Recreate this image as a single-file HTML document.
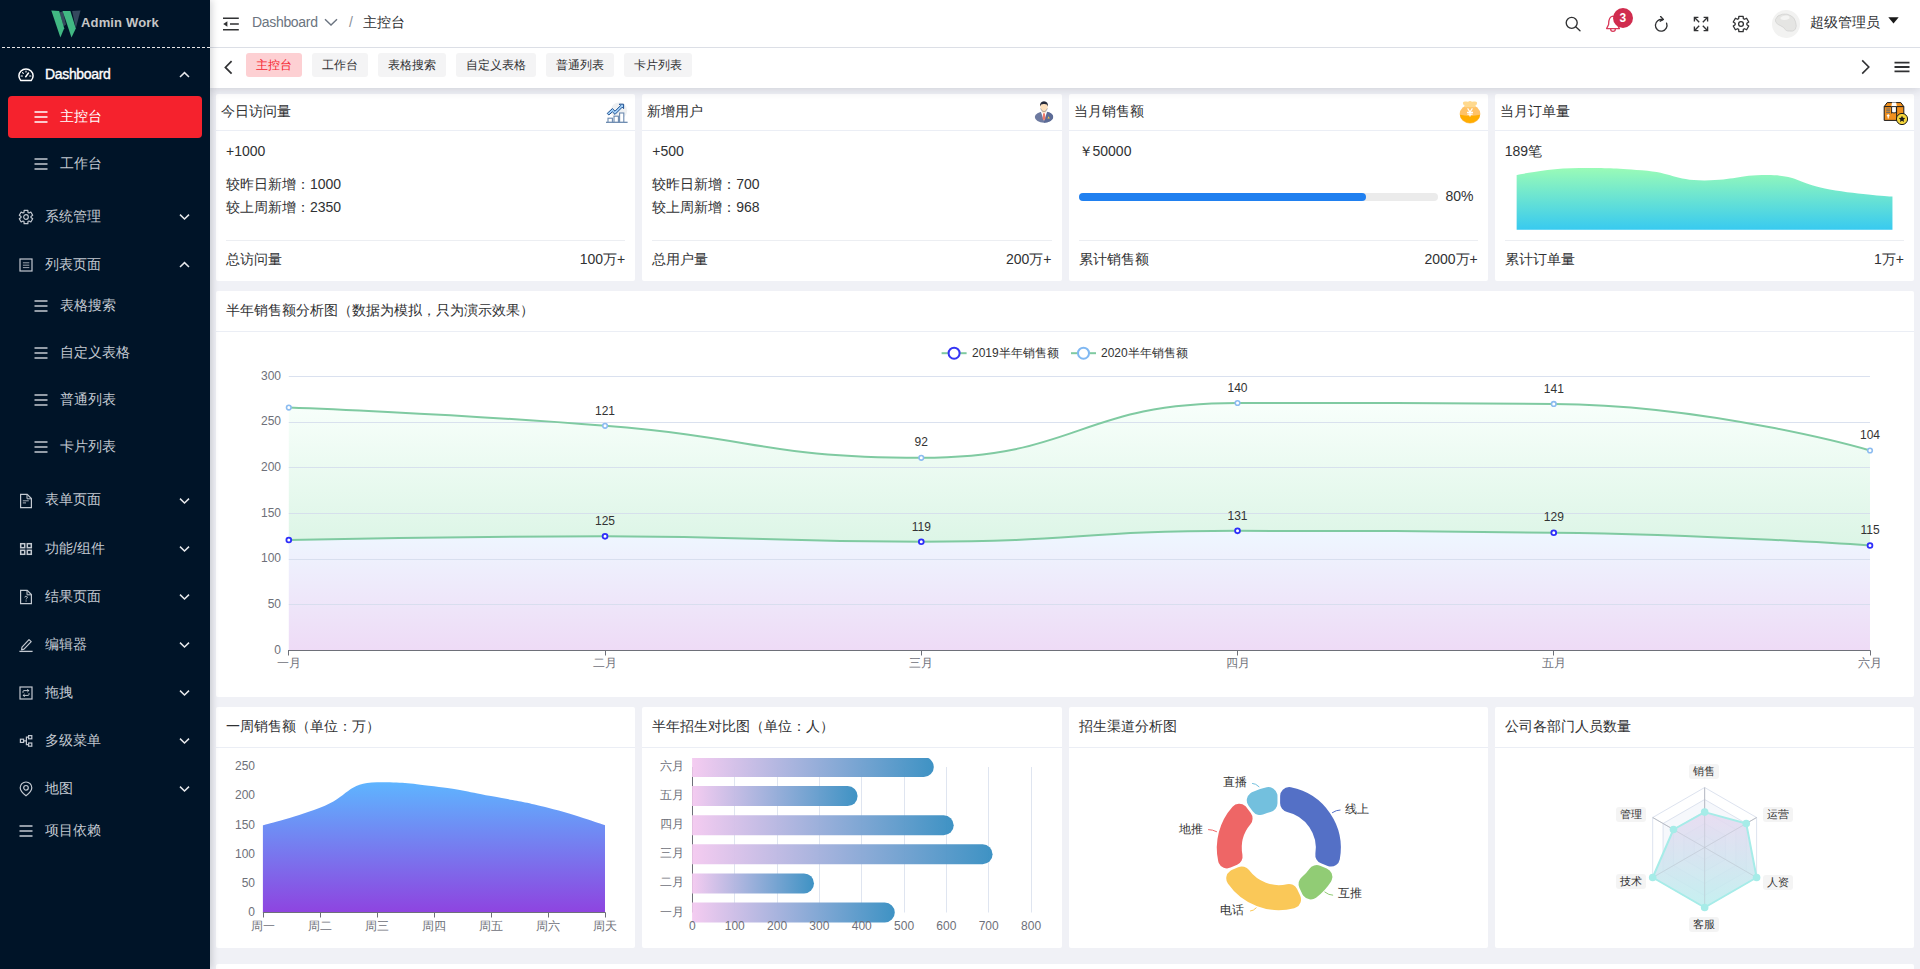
<!DOCTYPE html>
<html lang="zh"><head><meta charset="utf-8"><title>Admin Work</title>
<style>
html,body{margin:0;padding:0}
body{width:1920px;height:969px;overflow:hidden;position:relative;background:#f0f1f6;font-family:"Liberation Sans", sans-serif;font-size:14px;color:#303133}
div,span,svg{position:absolute;box-sizing:border-box}
span{white-space:pre;line-height:16px;height:16px}
.card{background:#fff;border-radius:2px}
.hd{left:0;top:0;width:100%;border-bottom:1px solid #ebeef5}
.t14{font-size:14px}
.t12{font-size:12px;line-height:14px;height:14px}
.ax{font-size:12px;line-height:14px;height:14px;color:#6e7079}
.r{text-align:right}
.c{text-align:center}
.mi{color:#c3c9d1;font-size:14px}
.tab{top:53px;height:24px;border-radius:3px;background:#f4f4f5;color:#303133;font-size:12px;line-height:24px;text-align:center}
.lbl{font-size:11px;line-height:15px;height:15px;width:30px;text-align:center;background:#f4f4f4;border-radius:3px;color:#333}
</style></head><body>

<div id="side" style="left:0;top:0;width:210px;height:969px;background:#001428;box-shadow:2px 0 7px rgba(0,10,25,.17);z-index:5">
<svg style="left:0;top:0" width="210" height="48" viewBox="0 0 210 48">
<polygon points="72.1,10.9 80.5,10.5 75.8,28.3" fill="#35495e"/>
<polygon points="59.6,12.5 63.0,11.2 66.0,24.6 63.6,26.2" fill="#35495e"/>
<polygon points="51.3,10.6 59.2,10.9 64.2,28.2 60.4,37.4" fill="#41b883"/>
<polygon points="62.6,10.9 70.4,10.9 75.8,28.4 71.5,37.4" fill="#41b883"/>
</svg>
<span style="left:81px;top:15px;font-size:13px;font-weight:700;color:#c6c6c6;letter-spacing:.15px">Admin Work</span>
<div style="left:0;top:47px;width:210px;height:1px;background:repeating-linear-gradient(90deg,#e8e8e8 0,#e8e8e8 3px,transparent 3px,transparent 5px);background-position:2px 0"></div>
<svg style="left:18px;top:66.5px" width="16" height="16" viewBox="0 0 16 16" fill="none" stroke="#fff" stroke-width="1.3" stroke-linecap="round" stroke-linejoin="round"><path d="M2.8,13.6 Q0.9,11.2 0.9,8.7 A7.1,6.7 0 0 1 15.1,8.7 Q15.1,11.2 13.2,13.6 Z" stroke-width="1.5"/><path d="M7.7,9.7 L10.5,6" stroke-width="1.5"/><path d="M3.1,9h1.3M11.6,9H12.9M8,4v1.1M4.5,5.6l.8,.8" stroke-width="1.1"/></svg>
<span class="mi" style="left:45px;top:66px;-webkit-text-stroke:.35px #fff;letter-spacing:-.33px;color:#fff">Dashboard</span>
<svg style="left:178.5px;top:71.0px" width="11" height="8" viewBox="0 0 11 8" fill="none" stroke="#e6e8eb" stroke-width="1.5"><path d="M1,6 L5.5,1.6 L10,6"/></svg>
<div style="left:8px;top:96.0px;width:194px;height:41.5px;border-radius:4px;background:#f5222d"></div>
<svg style="left:33px;top:108.9px" width="16" height="16" viewBox="0 0 16 16" fill="none" stroke="#fff" stroke-width="1.4"><path d="M1.5,3h13M1.5,8h13M1.5,13h13"/></svg>
<span class="mi" style="left:60px;top:108px;color:#fff">主控台</span>
<svg style="left:33px;top:155.75px" width="16" height="16" viewBox="0 0 16 16" fill="none" stroke="#c3c9d1" stroke-width="1.4"><path d="M1.5,3h13M1.5,8h13M1.5,13h13"/></svg>
<span class="mi" style="left:60px;top:155px;color:#c3c9d1">工作台</span>
<svg style="left:18px;top:208.6px" width="16" height="16" viewBox="0 0 16 16" fill="none" stroke="#c3c9d1" stroke-width="1.3" stroke-linecap="round" stroke-linejoin="round"><path d="M6.01,3.41 L6.14,1.35 L9.86,1.35 L9.99,3.41 L10.98,3.99 L12.83,3.07 L14.68,6.28 L12.97,7.43 L12.97,8.57 L14.68,9.72 L12.83,12.93 L10.98,12.01 L9.99,12.59 L9.86,14.65 L6.14,14.65 L6.01,12.59 L5.02,12.01 L3.17,12.93 L1.32,9.72 L3.03,8.57 L3.03,7.43 L1.32,6.28 L3.17,3.07 L5.02,3.99Z" stroke-width="1.2"/><circle cx="8" cy="8" r="2.3" stroke-width="1.2"/></svg>
<span class="mi" style="left:45px;top:208px;color:#c3c9d1">系统管理</span>
<svg style="left:178.5px;top:213.1px" width="11" height="8" viewBox="0 0 11 8" fill="none" stroke="#e6e8eb" stroke-width="1.5"><path d="M1,1.6 L5.5,6 L10,1.6"/></svg>
<svg style="left:18px;top:256.8px" width="16" height="16" viewBox="0 0 16 16" fill="none" stroke="#c3c9d1" stroke-width="1.3"  stroke-linejoin="miter"><rect x="2" y="2" width="12" height="12" stroke-width="1.2"/><path d="M4.9,5.8h6.4M4.9,8.2h6.4M4.9,10.6h6.4" stroke-width="1" stroke-opacity=".8"/></svg>
<span class="mi" style="left:45px;top:256px;color:#c3c9d1">列表页面</span>
<svg style="left:178.5px;top:261.3px" width="11" height="8" viewBox="0 0 11 8" fill="none" stroke="#e6e8eb" stroke-width="1.5"><path d="M1,6 L5.5,1.6 L10,6"/></svg>
<svg style="left:33px;top:298.3px" width="16" height="16" viewBox="0 0 16 16" fill="none" stroke="#c3c9d1" stroke-width="1.4"><path d="M1.5,3h13M1.5,8h13M1.5,13h13"/></svg>
<span class="mi" style="left:60px;top:297px;color:#c3c9d1">表格搜索</span>
<svg style="left:33px;top:345.2px" width="16" height="16" viewBox="0 0 16 16" fill="none" stroke="#c3c9d1" stroke-width="1.4"><path d="M1.5,3h13M1.5,8h13M1.5,13h13"/></svg>
<span class="mi" style="left:60px;top:344px;color:#c3c9d1">自定义表格</span>
<svg style="left:33px;top:392.2px" width="16" height="16" viewBox="0 0 16 16" fill="none" stroke="#c3c9d1" stroke-width="1.4"><path d="M1.5,3h13M1.5,8h13M1.5,13h13"/></svg>
<span class="mi" style="left:60px;top:391px;color:#c3c9d1">普通列表</span>
<svg style="left:33px;top:439.1px" width="16" height="16" viewBox="0 0 16 16" fill="none" stroke="#c3c9d1" stroke-width="1.4"><path d="M1.5,3h13M1.5,8h13M1.5,13h13"/></svg>
<span class="mi" style="left:60px;top:438px;color:#c3c9d1">卡片列表</span>
<svg style="left:18px;top:492.6px" width="16" height="16" viewBox="0 0 16 16" fill="none" stroke="#c3c9d1" stroke-width="1.3"  stroke-linejoin="miter"><path d="M2.6,1.4h6.6L13.4,5.6v9H2.6z" stroke-width="1.2"/><path d="M9,1.6V5.8H13.2" stroke-width="1"/><path d="M4.8,7.8h6M4.8,9.9h3.2" stroke-width="1" stroke-opacity=".85"/></svg>
<span class="mi" style="left:45px;top:491px;color:#c3c9d1">表单页面</span>
<svg style="left:178.5px;top:497.1px" width="11" height="8" viewBox="0 0 11 8" fill="none" stroke="#e6e8eb" stroke-width="1.5"><path d="M1,1.6 L5.5,6 L10,1.6"/></svg>
<svg style="left:18px;top:540.8px" width="16" height="16" viewBox="0 0 16 16" fill="none" stroke="#c3c9d1" stroke-width="1.3" stroke-linecap="round" stroke-linejoin="miter"><rect x="2.7" y="2.7" width="4" height="4" stroke-width="1.5"/><rect x="9.3" y="2.7" width="4" height="4" stroke-width="1.5"/><rect x="2.7" y="9.3" width="4" height="4" stroke-width="1.5"/><rect x="9.3" y="9.3" width="4" height="4" stroke-width="1.5"/></svg>
<span class="mi" style="left:45px;top:540px;color:#c3c9d1">功能/组件</span>
<svg style="left:178.5px;top:545.3px" width="11" height="8" viewBox="0 0 11 8" fill="none" stroke="#e6e8eb" stroke-width="1.5"><path d="M1,1.6 L5.5,6 L10,1.6"/></svg>
<svg style="left:18px;top:588.8px" width="16" height="16" viewBox="0 0 16 16" fill="none" stroke="#c3c9d1" stroke-width="1.3"  stroke-linejoin="miter"><path d="M2.6,1.4h6.6L13.4,5.6v9H2.6z" stroke-width="1.2"/><path d="M9,1.6V5.8H13.2" stroke-width="1"/><path d="M6.8,8.4a1.25,1.2 0 1 1 1.8,1.1q-.5,.3 -.5,.9" stroke-width="1"/><path d="M8.1,11.6v1" stroke-width="1.1"/></svg>
<span class="mi" style="left:45px;top:588px;color:#c3c9d1">结果页面</span>
<svg style="left:178.5px;top:593.3px" width="11" height="8" viewBox="0 0 11 8" fill="none" stroke="#e6e8eb" stroke-width="1.5"><path d="M1,1.6 L5.5,6 L10,1.6"/></svg>
<svg style="left:18px;top:636.8px" width="16" height="16" viewBox="0 0 16 16" fill="none" stroke="#c3c9d1" stroke-width="1.3"  stroke-linejoin="round"><path d="M4,10.2 L11,2.6 13.2,4.6 6,12.2 3.6,12.8z" stroke-width="1.2"/><path d="M1.4,14.4h13.2" stroke-width="1.3"/></svg>
<span class="mi" style="left:45px;top:636px;color:#c3c9d1">编辑器</span>
<svg style="left:178.5px;top:641.3px" width="11" height="8" viewBox="0 0 11 8" fill="none" stroke="#e6e8eb" stroke-width="1.5"><path d="M1,1.6 L5.5,6 L10,1.6"/></svg>
<svg style="left:18px;top:684.8px" width="16" height="16" viewBox="0 0 16 16" fill="none" stroke="#c3c9d1" stroke-width="1.3" stroke-linecap="round" stroke-linejoin="miter"><rect x="2" y="2" width="12" height="12" stroke-width="1.2"/><path d="M5,7.4V6.6q0,-1 1,-1H10.6M9.6,4.4l1.2,1.2L9.6,6.8M11,8.6v.8q0,1 -1,1H5.4M6.4,9.2l-1.2,1.2L6.4,11.6" stroke-width="1"/></svg>
<span class="mi" style="left:45px;top:684px;color:#c3c9d1">拖拽</span>
<svg style="left:178.5px;top:689.3px" width="11" height="8" viewBox="0 0 11 8" fill="none" stroke="#e6e8eb" stroke-width="1.5"><path d="M1,1.6 L5.5,6 L10,1.6"/></svg>
<svg style="left:18px;top:732.9px" width="16" height="16" viewBox="0 0 16 16" fill="none" stroke="#c3c9d1" stroke-width="1.3" stroke-linecap="round" stroke-linejoin="miter"><rect x="2.4" y="6.2" width="3.2" height="3.2" stroke-width="1.2"/><rect x="10.6" y="2.6" width="3.2" height="3.2" stroke-width="1.2"/><rect x="10.6" y="10" width="3.2" height="3.2" stroke-width="1.2"/><path d="M5.8,7.8h2.6M10.4,4.2H8.4v7.4h2" stroke-width="1.2"/></svg>
<span class="mi" style="left:45px;top:732px;color:#c3c9d1">多级菜单</span>
<svg style="left:178.5px;top:737.4px" width="11" height="8" viewBox="0 0 11 8" fill="none" stroke="#e6e8eb" stroke-width="1.5"><path d="M1,1.6 L5.5,6 L10,1.6"/></svg>
<svg style="left:18px;top:780.8px" width="16" height="16" viewBox="0 0 16 16" fill="none" stroke="#c3c9d1" stroke-width="1.3" stroke-linecap="round" stroke-linejoin="round"><path d="M8,14.8 Q2.2,10.4 2.2,6.8 A5.8,5.8 0 0 1 13.8,6.8 Q13.8,10.4 8,14.8z" stroke-width="1.2"/><circle cx="8" cy="6.8" r="2.3" stroke-width="1.2"/></svg>
<span class="mi" style="left:45px;top:780px;color:#c3c9d1">地图</span>
<svg style="left:178.5px;top:785.3px" width="11" height="8" viewBox="0 0 11 8" fill="none" stroke="#e6e8eb" stroke-width="1.5"><path d="M1,1.6 L5.5,6 L10,1.6"/></svg>
<svg style="left:18px;top:822.8px" width="16" height="16" viewBox="0 0 16 16" fill="none" stroke="#c3c9d1" stroke-width="1.4"><path d="M1.5,3h13M1.5,8h13M1.5,13h13"/></svg>
<span class="mi" style="left:45px;top:822px;color:#c3c9d1">项目依赖</span>
</div>
<div id="header" style="left:210px;top:0;width:1710px;height:48px;background:#fff;border-bottom:1px solid #dcdfe6;z-index:4">
<svg style="left:12px;top:16px" width="18" height="16" viewBox="0 0 18 16" fill="none" stroke="#303133" stroke-width="1.5"><path d="M1,2.3h15.8M8,8h8.8M1,13.7h15.8"/><path d="M1.2,8 L5.4,5.2V10.8z" fill="#303133" stroke="none"/></svg>
<span style="left:42px;top:14px;font-size:14px;color:#6b7480;letter-spacing:-.32px">Dashboard</span>
<svg style="left:114px;top:17px" width="14" height="10" viewBox="0 0 14 10" fill="none" stroke="#6b7480" stroke-width="1.4"><path d="M1,2.2 L7,8 L13,2.2"/></svg>
<span style="left:139px;top:14px;font-size:14px;color:#8a8f99">/</span>
<span style="left:153px;top:14px;font-size:14px;color:#303133">主控台</span>
<svg style="left:1354px;top:15px" width="18" height="18" viewBox="0 0 18 18" fill="none" stroke="#303133" stroke-width="1.35" stroke-linecap="round"><circle cx="7.7" cy="7.8" r="5.5"/><path d="M11.7,11.8 L16,15.8"/></svg>
<svg style="left:1394px;top:13px" width="18" height="21" viewBox="0 0 18 21" fill="none" stroke="#d93a5a" stroke-width="1.3" stroke-linejoin="round"><path d="M2.6,15.6 L4.6,11.5 Q4.6,3.6 9,3.2 Q13.4,3.6 13.4,11.5 L15.4,15.6 Z"/><path d="M6.6,15.8 A2.4,2.6 0 0 0 11.4,15.8"/></svg>
<div style="left:1403px;top:8.3px;width:19.6px;height:19.6px;border-radius:10px;background:#d02c4e"></div>
<span style="left:1403px;top:10px;width:19.6px;text-align:center;font-size:12px;font-weight:700;color:#fff">3</span>
<svg style="left:1442px;top:14px" width="18" height="20" viewBox="0 0 18 20" fill="none" stroke="#303133" stroke-width="1.35" stroke-linecap="round" stroke-linejoin="round"><path d="M14.6,9.2 A5.8,5.8 0 1 1 10.6,5.7"/><path d="M8.6,2.6 L11.4,5.4 L8.2,7.2"/></svg>
<svg style="left:1483px;top:16px" width="16" height="16" viewBox="0 0 16 16" fill="none" stroke="#303133" stroke-width="1.35"><path d="M1.4,5.4V1.4h4M1.6,1.6 L6.2,6.2M10.6,1.4h4v4M14.4,1.6 L9.8,6.2M1.4,10.6v4h4M1.6,14.4 L6.2,9.8M14.6,10.6v4h-4M14.4,14.4 L9.8,9.8"/></svg>
<svg style="left:1521px;top:14px" width="20" height="20" viewBox="0 0 20 20" fill="none" stroke="#303133" stroke-width="1.3" stroke-linejoin="round"><path d="M7.66,4.59 L7.85,2.29 L12.15,2.29 L12.34,4.59 L13.52,5.26 L15.60,4.28 L17.75,8.01 L15.86,9.32 L15.86,10.68 L17.75,11.99 L15.60,15.72 L13.52,14.74 L12.34,15.41 L12.15,17.71 L7.85,17.71 L7.66,15.41 L6.48,14.74 L4.40,15.72 L2.25,11.99 L4.14,10.68 L4.14,9.32 L2.25,8.01 L4.40,4.28 L6.48,5.26Z"/><circle cx="10" cy="10" r="2.4"/></svg>
<svg style="left:1562px;top:10px" width="28" height="28" viewBox="0 0 28 28"><circle cx="14" cy="14" r="14" fill="#f2f2f1"/><path d="M3.4,9.6 Q5,5 10.5,4.2 Q15.5,3.4 18.6,5.6 Q22.6,7.4 23.6,12 Q25,16.6 23.4,19.2 Q21.4,22 17.6,21 Q13.6,21.4 11.8,17.6 Q8.6,15.6 6,14.4 Q3,12.6 3.4,9.6z" fill="#e5e5e3" stroke="#d0d0ce" stroke-width=".7"/><path d="M8.6,7.4 Q11.6,4.8 15.4,5.6 Q18,6.4 17.4,8.4 Q14,10.4 10.6,9.8 Q8,9.2 8.6,7.4z" fill="#f4f4f3"/></svg>
<span style="left:1600px;top:14px;font-size:14px;color:#303133">超级管理员</span>
<svg style="left:1678px;top:17px" width="11" height="7" viewBox="0 0 11 7"><path d="M0.3,0.3h10.4L5.5,6.6z" fill="#1a1a1a"/></svg>
</div>
<div id="tabs" style="left:210px;top:48px;width:1710px;height:40px;background:#fff;box-shadow:0 1px 10px rgba(20,25,45,.17);z-index:3">
<svg style="left:13px;top:11.6px" width="11" height="15" viewBox="0 0 11 15" fill="none" stroke="#303133" stroke-width="1.7"><path d="M8.6,1.2 L2.4,7.4 L8.6,13.6"/></svg>
<div class="tab" style="left:36px;top:5px;width:56px;background:#fdd0d3;color:#f5222d;">主控台</div>
<div class="tab" style="left:102px;top:5px;width:56px;">工作台</div>
<div class="tab" style="left:168px;top:5px;width:68px;">表格搜索</div>
<div class="tab" style="left:246px;top:5px;width:80px;">自定义表格</div>
<div class="tab" style="left:336px;top:5px;width:68px;">普通列表</div>
<div class="tab" style="left:414px;top:5px;width:68px;">卡片列表</div>
<svg style="left:1650px;top:11px" width="11" height="16" viewBox="0 0 11 16" fill="none" stroke="#303133" stroke-width="1.6"><path d="M2.2,1.4 L8.8,8 L2.2,14.6"/></svg>
<svg style="left:1684px;top:13px" width="16" height="12" viewBox="0 0 16 12" fill="none" stroke="#303133" stroke-width="1.8"><path d="M0.5,1.6h15M0.5,6h15M0.5,10.4h15"/></svg>
</div>
<div class="card" style="left:216px;top:94px;width:419.25px;height:187px">
<div class="hd" style="height:37px"></div>
<span style="left:5px;top:9px">今日访问量</span>
<svg style="left:389px;top:7px" width="23" height="23" viewBox="0 0 23 23">
<circle cx="14" cy="9.6" r="8.2" fill="#eef0f2"/>
<path d="M1,21.3h21.6" stroke="#5e7fa8" stroke-width="1.2"/>
<rect x="3" y="17.2" width="4.4" height="4" fill="#fff" stroke="#6c8ab0" stroke-width="1.1"/>
<rect x="9" y="15.2" width="4.4" height="6" fill="#fff" stroke="#6c8ab0" stroke-width="1.1"/>
<rect x="14.6" y="12" width="4.2" height="9.2" fill="#fff" stroke="#6c8ab0" stroke-width="1.1"/>
<path d="M2.2,12.4 L7.4,7.6 L10,10.2 L15.6,4.6 L14.2,3.2 H18.6 V7.6 L17.2,6.2 L10,13.4 L7.4,10.8 L3.8,14z" fill="#a5d3fb" stroke="#1f4f8f" stroke-width="1" stroke-linejoin="miter"/>
</svg>
<span style="left:10px;top:49px">+1000</span>
<span style="left:10px;top:82px">较昨日新增：1000</span>
<span style="left:10px;top:105px">较上周新增：2350</span>
<div style="left:10px;top:146px;width:399.25px;height:1px;background:#eceef2"></div>
<span style="left:10px;top:157px">总访问量</span>
<span class="r" style="right:10px;top:157px">100万+</span>
</div>
<div class="card" style="left:642.25px;top:94px;width:419.25px;height:187px">
<div class="hd" style="height:37px"></div>
<span style="left:5px;top:9px">新增用户</span>
<svg style="left:391px;top:6px" width="22" height="24" viewBox="0 0 22 24">
<ellipse cx="11" cy="17.1" rx="9.2" ry="5.6" fill="#6d7aa0"/>
<path d="M11,22.7 A9.2,5.6 0 0 0 20.2,17.1 A9.2,5.6 0 0 0 14,11.8 L11,16z" fill="#5c6b96"/>
<path d="M7.8,11.6 L11,21 L14.2,11.6z" fill="#fff"/>
<path d="M10.1,13.2h1.8l.5,5.6 -1.4,1.6 -1.4,-1.6z" fill="#f27b6a"/>
<path d="M14.4,18.4l1.2,-2.2 1.2,2.2z" fill="#f2c94c"/>
<rect x="9.2" y="9.6" width="3.6" height="3" fill="#fbd9b0"/>
<ellipse cx="11" cy="6.6" rx="3.7" ry="4.6" fill="#fde0bd"/>
<path d="M7.1,6.4 Q6.6,1.4 11,1.2 Q15.4,1.4 14.9,6.4 Q14.4,3.8 11,4 Q7.6,3.8 7.1,6.4z" fill="#252a3a"/>
<path d="M7.6,8.4 Q8.4,11.6 11,11.6 Q13.6,11.6 14.4,8.4" fill="none" stroke="#4a5068" stroke-width=".7" opacity=".6"/>
</svg>
<span style="left:10px;top:49px">+500</span>
<span style="left:10px;top:82px">较昨日新增：700</span>
<span style="left:10px;top:105px">较上周新增：968</span>
<div style="left:10px;top:146px;width:399.25px;height:1px;background:#eceef2"></div>
<span style="left:10px;top:157px">总用户量</span>
<span class="r" style="right:10px;top:157px">200万+</span>
</div>
<div class="card" style="left:1068.5px;top:94px;width:419.25px;height:187px">
<div class="hd" style="height:37px"></div>
<span style="left:5px;top:9px">当月销售额</span>
<svg style="left:389px;top:6px" width="24" height="24" viewBox="0 0 24 24">
<ellipse cx="12" cy="14.1" rx="10.3" ry="9.4" fill="#ffc266"/>
<path d="M1.8,14.8 Q12,17 22.2,14.8 A10.3,9.4 0 0 1 1.8,14.8z" fill="#ffad00"/>
<path d="M5.2,4.2 Q4.2,2 7,1.6 Q9,1.4 10,1.8 Q12,0.4 14,1.8 Q15,1.4 17,1.6 Q19.8,2 18.8,4.2 Q18.2,5.4 17,6 Q17.6,6.6 17.2,7.2 H6.8 Q6.4,6.6 7,6 Q5.8,5.4 5.2,4.2z" fill="#ffd98e"/>
<path d="M9.6,8.4 L12,12 L14.4,8.4M9,12.4h6M9.4,14.2h5.2M12,12v4.4" fill="none" stroke="#fff" stroke-width="1.2"/>
</svg>
<span style="left:10px;top:49px">￥50000</span>
<div style="left:10px;top:99px;width:359px;height:8px;border-radius:4px;background:#ebebeb"></div>
<div style="left:10px;top:99px;width:287px;height:8px;border-radius:4px;background:#2080f0"></div>
<span style="left:377px;top:94px">80%</span>
<div style="left:10px;top:146px;width:399.25px;height:1px;background:#eceef2"></div>
<span style="left:10px;top:157px">累计销售额</span>
<span class="r" style="right:10px;top:157px">2000万+</span>
</div>
<div class="card" style="left:1494.75px;top:94px;width:419.25px;height:187px">
<div class="hd" style="height:37px"></div>
<span style="left:5px;top:9px">当月订单量</span>
<svg style="left:388.7px;top:7px" width="26" height="25" viewBox="0 0 26 25">
<path d="M1.2,5.6 L4.2,1.6 H17.8 L20.8,5.6 V19.4 H1.2z" fill="#f0901e" stroke="#1a1a1a" stroke-width="1"/>
<path d="M1.2,5.6 H20.8" stroke="#1a1a1a" stroke-width="1"/>
<path d="M9,1.6h4.2l.6,4h-5.4z" fill="#fff"/>
<path d="M8.6,5.6h4.8v6.6l-1.2,-.8 -1.2,.8 -1.2,-.8 -1.2,.8z" fill="#fff" stroke="#1a1a1a" stroke-width=".9"/>
<path d="M13.6,5.6V19.4" stroke="#1a1a1a" stroke-width=".9"/>
<path d="M3.2,8h3.8M3.2,9.8h3.8M3.2,11.6h3.8" stroke="#5a6a7a" stroke-width=".9"/>
<path d="M5.2,14v3.6M4,15.2l1.2,-1.4 1.2,1.4" stroke="#fff" stroke-width="1.1" fill="none"/>
<circle cx="19" cy="18" r="5.6" fill="#f5d63c" stroke="#1a1a1a" stroke-width="1"/>
<path d="M19,14.8l1,2 2.2,.3 -1.6,1.6 .4,2.2 -2,-1.1 -2,1.1 .4,-2.2 -1.6,-1.6 2.2,-.3z" fill="#1a1a1a"/>
</svg>
<span style="left:10px;top:49px">189笔</span>
<svg style="left:0;top:0" width="419.25" height="187" viewBox="0 0 419.25 187"><defs><linearGradient id="gm" gradientUnits="userSpaceOnUse" x1="0" y1="72.9" x2="0" y2="135.7"><stop offset="0" stop-color="#9bfcb6"/><stop offset="1" stop-color="#38caf0"/></linearGradient></defs><path d="M21.65,81.10 C21.65,81.10 52.88,73.90 84.28,73.90 C115.51,73.90 115.79,73.90 146.92,76.30 C178.42,78.73 178.09,86.40 209.55,86.40 C240.72,86.40 241.21,81.10 272.18,81.10 C303.85,81.10 303.20,90.07 334.82,95.50 C365.83,100.82 397.45,102.60 397.45,102.60 L397.45,135.7 L21.65,135.7Z" fill="url(#gm)"/></svg>
<div style="left:10px;top:146px;width:399.25px;height:1px;background:#eceef2"></div>
<span style="left:10px;top:157px">累计订单量</span>
<span class="r" style="right:10px;top:157px">1万+</span>
</div>
<div class="card" style="left:216px;top:291px;width:1698px;height:406px">
<div class="hd" style="height:41px"></div>
<span style="left:10px;top:11px">半年销售额分析图（数据为模拟，只为演示效果）</span>
<svg style="left:0;top:0" width="1698" height="406" viewBox="0 0 1698 406"><defs>
<linearGradient id="ga" gradientUnits="userSpaceOnUse" x1="0" y1="239.9" x2="0" y2="359.5"><stop offset="0" stop-color="#eef7ff"/><stop offset="1" stop-color="#eedbf6"/></linearGradient>
<linearGradient id="gb" gradientUnits="userSpaceOnUse" x1="0" y1="112.0" x2="0" y2="254.5"><stop offset="0" stop-color="#f8fffb"/><stop offset="1" stop-color="#dcf5e6"/></linearGradient>
</defs><path d="M72.80,248.99 C72.80,248.99 230.93,245.33 389.04,245.33 C547.17,245.33 547.20,250.81 705.28,250.81 C863.44,250.81 863.35,239.85 1021.52,239.85 C1179.59,239.85 1179.70,239.85 1337.76,241.68 C1495.94,243.51 1654.00,254.47 1654.00,254.47 L1654.00,359.5 L72.80,359.5Z" fill="url(#ga)"/><path d="M72.80,116.55 C72.80,116.55 231.19,122.28 389.04,134.82 C547.43,147.40 547.93,166.79 705.28,166.79 C864.17,166.79 862.23,111.99 1021.52,111.99 C1178.47,111.99 1180.49,111.99 1337.76,112.90 C1496.73,113.82 1654.00,159.48 1654.00,159.48 L1654.00,254.47 C1654.00,254.47 1495.94,243.51 1337.76,241.68 C1179.70,239.85 1179.59,239.85 1021.52,239.85 C863.35,239.85 863.44,250.81 705.28,250.81 C547.20,250.81 547.17,245.33 389.04,245.33 C230.93,245.33 72.80,248.99 72.80,248.99Z" fill="url(#gb)"/><path d="M72.8,313.5H1654.0" stroke="#d3dcec" stroke-opacity=".85" stroke-width="1"/><path d="M72.8,268.5H1654.0" stroke="#d3dcec" stroke-opacity=".85" stroke-width="1"/><path d="M72.8,222.5H1654.0" stroke="#d3dcec" stroke-opacity=".85" stroke-width="1"/><path d="M72.8,176.5H1654.0" stroke="#d3dcec" stroke-opacity=".85" stroke-width="1"/><path d="M72.8,131.5H1654.0" stroke="#d3dcec" stroke-opacity=".85" stroke-width="1"/><path d="M72.8,85.5H1654.0" stroke="#d3dcec" stroke-opacity=".85" stroke-width="1"/><path d="M72.0,359.5H1654.5" stroke="#6e7079" stroke-width="1"/><path d="M72.5,359.5v5" stroke="#6e7079" stroke-width="1"/><path d="M389.5,359.5v5" stroke="#6e7079" stroke-width="1"/><path d="M705.5,359.5v5" stroke="#6e7079" stroke-width="1"/><path d="M1021.5,359.5v5" stroke="#6e7079" stroke-width="1"/><path d="M1337.5,359.5v5" stroke="#6e7079" stroke-width="1"/><path d="M1654.5,359.5v5" stroke="#6e7079" stroke-width="1"/><path d="M72.80,248.99 C72.80,248.99 230.93,245.33 389.04,245.33 C547.17,245.33 547.20,250.81 705.28,250.81 C863.44,250.81 863.35,239.85 1021.52,239.85 C1179.59,239.85 1179.70,239.85 1337.76,241.68 C1495.94,243.51 1654.00,254.47 1654.00,254.47" fill="none" stroke="#7fcaa1" stroke-width="2"/><path d="M72.80,116.55 C72.80,116.55 231.19,122.28 389.04,134.82 C547.43,147.40 547.93,166.79 705.28,166.79 C864.17,166.79 862.23,111.99 1021.52,111.99 C1178.47,111.99 1180.49,111.99 1337.76,112.90 C1496.73,113.82 1654.00,159.48 1654.00,159.48" fill="none" stroke="#7fcaa1" stroke-width="2"/><circle cx="72.80" cy="248.99" r="2.4" fill="#fff" stroke="#2e2efa" stroke-width="1.8"/><circle cx="389.04" cy="245.33" r="2.4" fill="#fff" stroke="#2e2efa" stroke-width="1.8"/><circle cx="705.28" cy="250.81" r="2.4" fill="#fff" stroke="#2e2efa" stroke-width="1.8"/><circle cx="1021.52" cy="239.85" r="2.4" fill="#fff" stroke="#2e2efa" stroke-width="1.8"/><circle cx="1337.76" cy="241.68" r="2.4" fill="#fff" stroke="#2e2efa" stroke-width="1.8"/><circle cx="1654.00" cy="254.47" r="2.4" fill="#fff" stroke="#2e2efa" stroke-width="1.8"/><circle cx="72.80" cy="116.55" r="2.3" fill="#fff" stroke="#8cbcf0" stroke-width="1.6"/><circle cx="389.04" cy="134.82" r="2.3" fill="#fff" stroke="#8cbcf0" stroke-width="1.6"/><circle cx="705.28" cy="166.79" r="2.3" fill="#fff" stroke="#8cbcf0" stroke-width="1.6"/><circle cx="1021.52" cy="111.99" r="2.3" fill="#fff" stroke="#8cbcf0" stroke-width="1.6"/><circle cx="1337.76" cy="112.90" r="2.3" fill="#fff" stroke="#8cbcf0" stroke-width="1.6"/><circle cx="1654.00" cy="159.48" r="2.3" fill="#fff" stroke="#8cbcf0" stroke-width="1.6"/><path d="M725.6,62.19999999999999h25" stroke="#7fcaa1" stroke-width="2"/><circle cx="738.1" cy="62.19999999999999" r="5.5" fill="#fff" stroke="#3434f4" stroke-width="2"/><path d="M855,62.19999999999999h25" stroke="#7fcaa1" stroke-width="2"/><circle cx="867.5" cy="62.19999999999999" r="5.5" fill="#fff" stroke="#80b8f2" stroke-width="2"/></svg>
<span class="t12" style="left:756px;top:55px;color:#333">2019半年销售额</span>
<span class="t12" style="left:885px;top:55px;color:#333">2020半年销售额</span>
<span class="ax r" style="left:24px;width:41px;top:352px">0</span>
<span class="ax r" style="left:24px;width:41px;top:306px">50</span>
<span class="ax r" style="left:24px;width:41px;top:260px">100</span>
<span class="ax r" style="left:24px;width:41px;top:215px">150</span>
<span class="ax r" style="left:24px;width:41px;top:169px">200</span>
<span class="ax r" style="left:24px;width:41px;top:123px">250</span>
<span class="ax r" style="left:24px;width:41px;top:78px">300</span>
<span class="ax c" style="left:42.8px;width:60px;top:365px">一月</span>
<span class="ax c" style="left:359.0px;width:60px;top:365px">二月</span>
<span class="ax c" style="left:675.3px;width:60px;top:365px">三月</span>
<span class="ax c" style="left:991.5px;width:60px;top:365px">四月</span>
<span class="ax c" style="left:1307.8px;width:60px;top:365px">五月</span>
<span class="ax c" style="left:1624.0px;width:60px;top:365px">六月</span>
<span class="t12 c" style="left:359.0px;width:60px;top:223px;color:#333">125</span>
<span class="t12 c" style="left:675.3px;width:60px;top:229px;color:#333">119</span>
<span class="t12 c" style="left:991.5px;width:60px;top:218px;color:#333">131</span>
<span class="t12 c" style="left:1307.8px;width:60px;top:219px;color:#333">129</span>
<span class="t12 c" style="left:1624.0px;width:60px;top:232px;color:#333">115</span>
<span class="t12 c" style="left:359.0px;width:60px;top:113px;color:#333">121</span>
<span class="t12 c" style="left:675.3px;width:60px;top:144px;color:#333">92</span>
<span class="t12 c" style="left:991.5px;width:60px;top:90px;color:#333">140</span>
<span class="t12 c" style="left:1307.8px;width:60px;top:91px;color:#333">141</span>
<span class="t12 c" style="left:1624.0px;width:60px;top:137px;color:#333">104</span>
</div>
<div class="card" style="left:216px;top:707px;width:419.25px;height:241px">
<div class="hd" style="height:41px"></div>
<span style="left:10px;top:11px">一周销售额（单位：万）</span>
<svg style="left:0;top:0" width="419.25" height="241" viewBox="0 0 419.25 241"><defs><linearGradient id="gw" gradientUnits="userSpaceOnUse" x1="0" y1="74.6" x2="0" y2="205.5"><stop offset="0" stop-color="#5eb5ff"/><stop offset="1" stop-color="#8e44e0"/></linearGradient></defs><path d="M46.90,118.20 C46.90,118.20 76.08,111.25 103.92,100.74 C133.10,89.72 131.15,75.13 160.93,75.13 C188.17,75.13 189.62,75.74 217.95,79.21 C246.63,82.72 246.54,83.73 274.97,89.10 C303.55,94.50 303.82,93.55 331.98,100.74 C360.84,108.10 389.00,118.20 389.00,118.20 L389.00,205.5 L46.90,205.5Z" fill="url(#gw)"/><path d="M46.9,205.5H389.5" stroke="#6e7079" stroke-width="1"/><path d="M47.5,205.5v5" stroke="#6e7079" stroke-width="1"/><path d="M104.5,205.5v5" stroke="#6e7079" stroke-width="1"/><path d="M161.5,205.5v5" stroke="#6e7079" stroke-width="1"/><path d="M218.5,205.5v5" stroke="#6e7079" stroke-width="1"/><path d="M275.5,205.5v5" stroke="#6e7079" stroke-width="1"/><path d="M332.5,205.5v5" stroke="#6e7079" stroke-width="1"/><path d="M389.5,205.5v5" stroke="#6e7079" stroke-width="1"/></svg>
<span class="ax r" style="left:9px;width:30px;top:198px">0</span>
<span class="ax r" style="left:9px;width:30px;top:169px">50</span>
<span class="ax r" style="left:9px;width:30px;top:140px">100</span>
<span class="ax r" style="left:9px;width:30px;top:111px">150</span>
<span class="ax r" style="left:9px;width:30px;top:81px">200</span>
<span class="ax r" style="left:9px;width:30px;top:52px">250</span>
<span class="ax c" style="left:21.9px;width:50px;top:212px">周一</span>
<span class="ax c" style="left:78.9px;width:50px;top:212px">周二</span>
<span class="ax c" style="left:135.9px;width:50px;top:212px">周三</span>
<span class="ax c" style="left:193.0px;width:50px;top:212px">周四</span>
<span class="ax c" style="left:250.0px;width:50px;top:212px">周五</span>
<span class="ax c" style="left:307.0px;width:50px;top:212px">周六</span>
<span class="ax c" style="left:364.0px;width:50px;top:212px">周天</span>
</div>
<div class="card" style="left:642.25px;top:707px;width:419.25px;height:241px">
<div class="hd" style="height:41px"></div>
<span style="left:10px;top:11px">半年招生对比图（单位：人）</span>
<svg style="left:0;top:0" width="419.25" height="241" viewBox="0 0 419.25 241"><defs><linearGradient id="gbar" x1="0" y1="0" x2="1" y2="0"><stop offset="0" stop-color="#f4caf0"/><stop offset="1" stop-color="#388fc2"/></linearGradient><clipPath id="cb"><rect x="0" y="51" width="419.25" height="200"/></clipPath></defs><path d="M92.5,60.0V205.5" stroke="#dfe5f0" stroke-width="1"/><path d="M135.5,60.0V205.5" stroke="#dfe5f0" stroke-width="1"/><path d="M177.5,60.0V205.5" stroke="#dfe5f0" stroke-width="1"/><path d="M219.5,60.0V205.5" stroke="#dfe5f0" stroke-width="1"/><path d="M262.5,60.0V205.5" stroke="#dfe5f0" stroke-width="1"/><path d="M304.5,60.0V205.5" stroke="#dfe5f0" stroke-width="1"/><path d="M346.5,60.0V205.5" stroke="#dfe5f0" stroke-width="1"/><path d="M389.5,60.0V205.5" stroke="#dfe5f0" stroke-width="1"/><path d="M50.5,60.0V205.5" stroke="#6e7079" stroke-width="1"/><path d="M50.1,50.0h231.7a10,10 0 0 1 0,20h-231.7z" fill="url(#gbar)" fill-opacity=".97" clip-path="url(#cb)"/><path d="M50.1,79.1h155.5a10,10 0 0 1 0,20h-155.5z" fill="url(#gbar)" fill-opacity=".97" clip-path="url(#cb)"/><path d="M50.1,108.2h251.6a10,10 0 0 1 0,20h-251.6z" fill="url(#gbar)" fill-opacity=".97" clip-path="url(#cb)"/><path d="M50.1,137.3h290.5a10,10 0 0 1 0,20h-290.5z" fill="url(#gbar)" fill-opacity=".97" clip-path="url(#cb)"/><path d="M50.1,166.4h111.9a10,10 0 0 1 0,20h-111.9z" fill="url(#gbar)" fill-opacity=".97" clip-path="url(#cb)"/><path d="M50.1,195.5h192.7a10,10 0 0 1 0,20h-192.7z" fill="url(#gbar)" fill-opacity=".97" clip-path="url(#cb)"/></svg>
<span class="ax r" style="left:-2.25px;width:43.5px;top:52.0px">六月</span>
<span class="ax r" style="left:-2.25px;width:43.5px;top:81.1px">五月</span>
<span class="ax r" style="left:-2.25px;width:43.5px;top:110.2px">四月</span>
<span class="ax r" style="left:-2.25px;width:43.5px;top:139.3px">三月</span>
<span class="ax r" style="left:-2.25px;width:43.5px;top:168.4px">二月</span>
<span class="ax r" style="left:-2.25px;width:43.5px;top:197.5px">一月</span>
<span class="ax c" style="left:30.1px;width:40px;top:211.5px">0</span>
<span class="ax c" style="left:72.5px;width:40px;top:211.5px">100</span>
<span class="ax c" style="left:114.8px;width:40px;top:211.5px">200</span>
<span class="ax c" style="left:157.1px;width:40px;top:211.5px">300</span>
<span class="ax c" style="left:199.5px;width:40px;top:211.5px">400</span>
<span class="ax c" style="left:241.8px;width:40px;top:211.5px">500</span>
<span class="ax c" style="left:284.1px;width:40px;top:211.5px">600</span>
<span class="ax c" style="left:326.4px;width:40px;top:211.5px">700</span>
<span class="ax c" style="left:368.8px;width:40px;top:211.5px">800</span>
</div>
<div class="card" style="left:1068.5px;top:707px;width:419.25px;height:241px">
<div class="hd" style="height:41px"></div>
<span style="left:10px;top:11px">招生渠道分析图</span>
<svg style="left:0;top:0" width="419.25" height="241" viewBox="0 0 419.25 241"><path d="M220.13,89.12 A53.0,53.0 0 0 1 261.95,150.54 L255.29,147.94 A46.0,46.0 0 0 0 220.11,96.27Z" fill="#5470c6" stroke="#5470c6" stroke-width="18.0" stroke-linejoin="round"/><path d="M254.38,169.77 A53.0,53.0 0 0 1 241.65,183.46 L238.53,177.02 A46.0,46.0 0 0 0 247.73,167.12Z" fill="#91cc75" stroke="#91cc75" stroke-width="18.0" stroke-linejoin="round"/><path d="M223.03,192.42 A53.0,53.0 0 0 1 166.25,171.30 L172.80,168.43 A46.0,46.0 0 0 0 219.95,185.97Z" fill="#fac858" stroke="#fac858" stroke-width="18.0" stroke-linejoin="round"/><path d="M158.01,152.35 A53.0,53.0 0 0 1 170.26,105.80 L174.59,111.50 A46.0,46.0 0 0 0 164.58,149.52Z" fill="#ee6666" stroke="#ee6666" stroke-width="18.0" stroke-linejoin="round"/><path d="M186.77,93.37 A53.0,53.0 0 0 1 199.47,89.12 L199.49,96.27 A46.0,46.0 0 0 0 191.06,99.09Z" fill="#73c0de" stroke="#73c0de" stroke-width="18.0" stroke-linejoin="round"/><path d="M263.1,105.8 Q267.3,103.0 271.5,103.0" fill="none" stroke="#5470c6" stroke-width="1"/><path d="M255.5,184.8 Q259.8,188.2 264.1,188.2" fill="none" stroke="#91cc75" stroke-width="1"/><path d="M187.5,200.6 Q184.3,204.0 181.1,204.0" fill="none" stroke="#fac858" stroke-width="1"/><path d="M147.9,124.8 Q143.5,122.6 139.1,122.6" fill="none" stroke="#ee6666" stroke-width="1"/><path d="M190.3,80.0 Q186.7,76.4 183.1,76.4" fill="none" stroke="#73c0de" stroke-width="1"/></svg>
<span class="t12" style="left:276.5px;top:94.5px;color:#333">线上</span>
<span class="t12" style="left:269.5px;top:179.0px;color:#333">互推</span>
<span class="t12 r" style="left:115.5px;width:60px;top:195.5px;color:#333">电话</span>
<span class="t12 r" style="left:74.5px;width:60px;top:114.5px;color:#333">地推</span>
<span class="t12 r" style="left:118.5px;width:60px;top:68.0px;color:#333">直播</span>
</div>
<div class="card" style="left:1494.75px;top:707px;width:419.25px;height:241px">
<div class="hd" style="height:41px"></div>
<span style="left:10px;top:11px">公司各部门人员数量</span>
<svg style="left:0;top:0" width="419.25" height="241" viewBox="0 0 419.25 241"><defs><linearGradient id="gr" gradientUnits="userSpaceOnUse" x1="0" y1="104.5" x2="0" y2="200.5"><stop offset="0" stop-color="#e6d8f0"/><stop offset="1" stop-color="#bdeeee"/></linearGradient></defs><polygon points="209.65,80.50 261.61,110.50 261.61,170.50 209.65,200.50 157.69,170.50 157.69,110.50" fill="#fff" stroke="#dde3ef" stroke-width="1"/><polygon points="209.65,92.50 251.22,116.50 251.22,164.50 209.65,188.50 168.08,164.50 168.08,116.50" fill="#f6f8fc" stroke="#dde3ef" stroke-width="1"/><polygon points="209.65,104.50 240.83,122.50 240.83,158.50 209.65,176.50 178.47,158.50 178.47,122.50" fill="#fff" stroke="#dde3ef" stroke-width="1"/><polygon points="209.65,116.50 230.43,128.50 230.43,152.50 209.65,164.50 188.87,152.50 188.87,128.50" fill="#f6f8fc" stroke="#dde3ef" stroke-width="1"/><polygon points="209.65,128.50 220.04,134.50 220.04,146.50 209.65,152.50 199.26,146.50 199.26,134.50" fill="#fff" stroke="#dde3ef" stroke-width="1"/><path d="M209.65,140.50L209.65,80.50" stroke="#b8bcc6" stroke-width="1"/><path d="M209.65,140.50L261.61,110.50" stroke="#b8bcc6" stroke-width="1"/><path d="M209.65,140.50L261.61,170.50" stroke="#b8bcc6" stroke-width="1"/><path d="M209.65,140.50L209.65,200.50" stroke="#b8bcc6" stroke-width="1"/><path d="M209.65,140.50L157.69,170.50" stroke="#b8bcc6" stroke-width="1"/><path d="M209.65,140.50L157.69,110.50" stroke="#b8bcc6" stroke-width="1"/><polygon points="209.65,105.10 251.22,116.50 261.61,170.50 209.65,200.50 157.69,170.50 178.47,122.50" fill="url(#gr)" fill-opacity=".88" stroke="#a6ece8" stroke-width="2" stroke-linejoin="round"/><path d="M209.65,140.50L209.65,80.50" stroke="#b8bcc6" stroke-opacity=".35" stroke-width="1"/><path d="M209.65,140.50L261.61,110.50" stroke="#b8bcc6" stroke-opacity=".35" stroke-width="1"/><path d="M209.65,140.50L261.61,170.50" stroke="#b8bcc6" stroke-opacity=".35" stroke-width="1"/><path d="M209.65,140.50L209.65,200.50" stroke="#b8bcc6" stroke-opacity=".35" stroke-width="1"/><path d="M209.65,140.50L157.69,170.50" stroke="#b8bcc6" stroke-opacity=".35" stroke-width="1"/><path d="M209.65,140.50L157.69,110.50" stroke="#b8bcc6" stroke-opacity=".35" stroke-width="1"/><circle cx="209.65" cy="105.10" r="3.8" fill="#a6ece8"/><circle cx="251.22" cy="116.50" r="3.8" fill="#a6ece8"/><circle cx="261.61" cy="170.50" r="3.8" fill="#a6ece8"/><circle cx="209.65" cy="200.50" r="3.8" fill="#a6ece8"/><circle cx="157.69" cy="170.50" r="3.8" fill="#a6ece8"/><circle cx="178.47" cy="122.50" r="3.8" fill="#a6ece8"/></svg>
<span class="lbl" style="left:194.7px;top:57.2px">销售</span>
<span class="lbl" style="left:268.5px;top:99.5px">运营</span>
<span class="lbl" style="left:268.5px;top:167.7px">人资</span>
<span class="lbl" style="left:194.7px;top:209.5px">客服</span>
<span class="lbl" style="left:120.8px;top:167.4px">技术</span>
<span class="lbl" style="left:120.8px;top:99.5px">管理</span>
</div>
<div class="card" style="left:216px;top:964px;width:1698px;height:20px;border-radius:2px 2px 0 0"></div>
</body></html>
